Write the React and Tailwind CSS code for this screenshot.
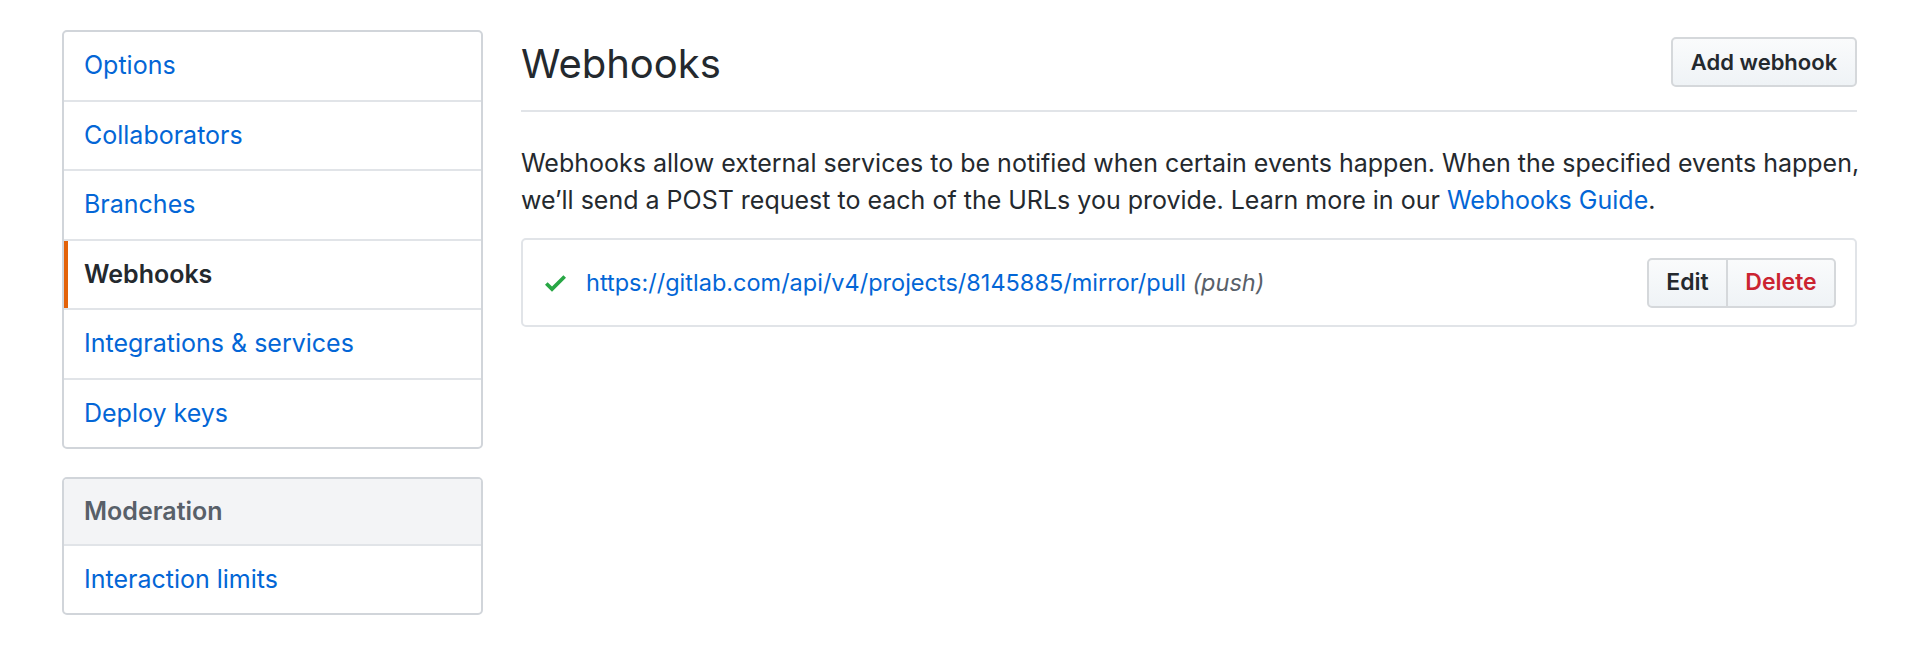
import React from "react";

const FONT = { fontFamily: "Inter, 'Liberation Sans', sans-serif" };

const MENU = [
  { label: "Options" },
  { label: "Collaborators" },
  { label: "Branches" },
  { label: "Webhooks", active: true },
  { label: "Integrations & services" },
  { label: "Deploy keys" },
];

function MenuItem({ label, active, last }) {
  return (
    <a
      href="#"
      className={`relative flex items-center pl-[20px] text-[25px] ${
        last ? "h-[67.5px]" : "h-[69.5px] border-b-2 border-[#e1e4e8]"
      } ${active ? "font-semibold text-[#24292e]" : "text-[#0366d6]"}`}
    >
      {active && <span className="absolute left-0 top-0 bottom-0 w-[4px] bg-[#e36209]" />}
      {label}
    </a>
  );
}

function CheckIcon() {
  return (
    <svg width="21" height="28" viewBox="0 0 12 16" className="fill-[#28a745] shrink-0">
      <path fillRule="evenodd" d="M12 5l-8 8-4-4 1.5-1.5L4 10l6.5-6.5L12 5z" />
    </svg>
  );
}

const btn =
  "border-2 border-[#d5d8db] bg-gradient-to-b from-[#fafbfc] to-[#eff3f6] font-semibold";

export default function App() {
  return (
    <div className="w-full h-[661px] bg-white text-[#24292e]" style={FONT}>
      <div className="flex gap-[38px] pl-[62px] pt-[30px]">
        {/* sidebar */}
        <div className="w-[421px] shrink-0 flex flex-col gap-[28px]">
          <nav className="flex flex-col border-2 border-[#d1d5da] rounded-[5px] overflow-hidden">
            {MENU.map((m, i) => (
              <MenuItem key={m.label} {...m} last={i === MENU.length - 1} />
            ))}
          </nav>
          <nav className="flex flex-col border-2 border-[#d1d5da] rounded-[5px] overflow-hidden">
            <div className="flex items-center h-[67px] pl-[20px] bg-[#f3f4f6] border-b-2 border-[#e1e4e8] text-[25px] font-semibold text-[#586069]">
              Moderation
            </div>
            <a href="#" className="flex items-center h-[67px] pl-[20px] text-[25px] text-[#0366d6]">
              Interaction limits
            </a>
          </nav>
        </div>

        {/* main */}
        <div className="w-[1336px]">
          <div className="flex items-start justify-between h-[82px] border-b-2 border-[#e1e4e8]">
            <h2 className="mt-[8px] text-[40px] leading-[52px] font-normal">Webhooks</h2>
            <button className={`${btn} mt-[7px] h-[50px] w-[186px] rounded-[5px] text-[22px] text-[#24292e]`}>
              Add webhook
            </button>
          </div>

          <p className="mt-[33px] text-[25px] leading-[37px] whitespace-nowrap">
            Webhooks allow external services to be notified when certain events happen. When the specified events
            happen,
            <br />
            we’ll send a POST request to each of the URLs you provide. Learn more in our{" "}
            <a href="#" className="text-[#0366d6]">
              Webhooks Guide
            </a>
            .
          </p>

          <div className="mt-[19px] h-[89px] flex items-center justify-between border-2 border-[#e1e4e8] rounded-[5px] pl-[22px] pr-[19px]">
            <div className="flex items-center gap-[20px] text-[23.5px]">
              <CheckIcon />
              <span>
                <a href="#" className="text-[#0366d6]">
                  https://gitlab.com/api/v4/projects/8145885/mirror/pull
                </a>{" "}
                <em className="text-[#586069]">(push)</em>
              </span>
            </div>
            <div className="flex">
              <button className={`${btn} h-[50px] w-[81px] rounded-l-[5px] text-[23px] text-[#24292e]`}>Edit</button>
              <button className={`${btn} -ml-[2px] h-[50px] w-[110px] rounded-r-[5px] text-[23px] text-[#cb2431]`}>
                Delete
              </button>
            </div>
          </div>
        </div>
      </div>
    </div>
  );
}
